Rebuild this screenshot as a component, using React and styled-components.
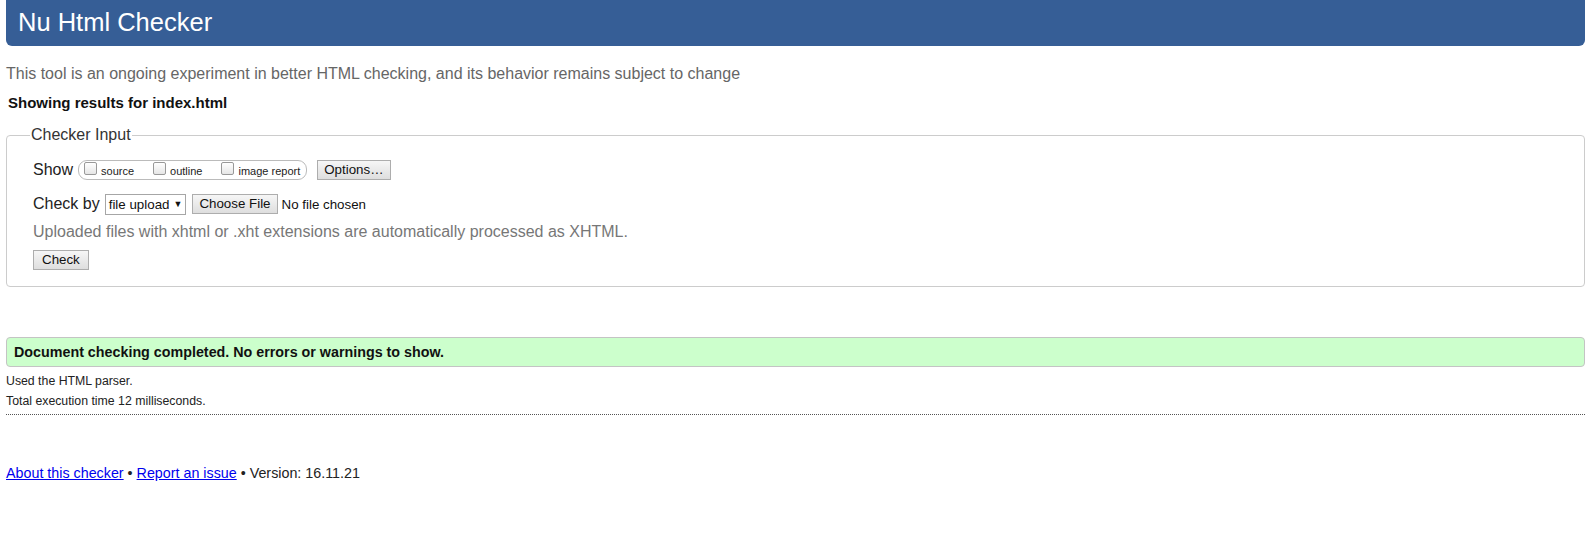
import React from 'react';
import styled, { createGlobalStyle } from 'styled-components';

const GlobalStyle = createGlobalStyle`
  html, body {
    margin: 0;
    padding: 0;
    background: #fff;
  }
  body {
    font-family: "Liberation Sans", Arial, sans-serif;
    color: #222;
  }
`;

const Page = styled.div`
  padding: 0 3px 0 6px;
`;

const Header = styled.h1`
  margin: 0;
  height: 46px;
  background-color: #365e96;
  color: #fff;
  font-size: 25.5px;
  font-weight: normal;
  line-height: 44px;
  padding-left: 12px;
  border-radius: 0 0 6px 6px;
`;

const Intro = styled.p`
  margin: 18px 0 0;
  font-size: 16px;
  line-height: 20px;
  color: #666;
`;

const Results = styled.h2`
  margin: 10px 0 0 2px;
  font-size: 15px;
  line-height: 18px;
  font-weight: bold;
  color: #111;
`;

const Fieldset = styled.fieldset`
  margin: 14px 0 0;
  padding: 15px 26px 16px;
  border: 1px solid #ccc;
  border-radius: 4px;
  min-height: 0;
`;

const Legend = styled.legend`
  padding: 0 1px;
  margin-left: -3px;
  font-size: 16px;
  color: #333;
`;

const Row = styled.div`
  display: flex;
  align-items: center;
  height: 22px;
  margin-bottom: ${(p) => p.$gap || 12}px;
  font-size: 16px;
  color: #222;
`;

const Label = styled.span`
  margin-right: 5px;
`;

const Pill = styled.span`
  display: inline-flex;
  align-items: center;
  height: 18px;
  border: 1px solid #bbb;
  border-radius: 9px;
  padding: 0 6px 0 5px;
  margin-right: 10px;
`;

const Option = styled.label`
  display: inline-flex;
  align-items: center;
  font-size: 11px;
  color: #222;
  padding-top: 2px;
  margin-right: ${(p) => (p.$last ? 0 : 19)}px;
`;

const Box = styled.span`
  display: inline-block;
  width: 11px;
  height: 11px;
  border: 1px solid #999;
  border-radius: 2px;
  background: linear-gradient(#fff, #e6e6e6);
  margin-right: 4px;
  margin-top: -6px;
`;

const Button = styled.button`
  font-family: "Liberation Sans", Arial, sans-serif;
  font-size: 13.33px;
  color: #111;
  height: 20px;
  padding: 0 ${(p) => p.$pad || 6}px;
  border: 1px solid #adadad;
  border-radius: 0;
  background: linear-gradient(#f6f6f6, #dedede);
  line-height: 18px;
  cursor: pointer;
`;

const Select = styled.span`
  display: inline-flex;
  align-items: center;
  height: 19px;
  border: 1px solid #a6a6a6;
  padding: 0 3px 0 3px;
  font-size: 13.33px;
  color: #111;
  margin: 0 6px 0 0;
  gap: 4px;
`;

const Arrow = styled.span`
  font-size: 9px;
`;

const FileName = styled.span`
  font-size: 13.33px;
  margin-left: 4px;
  color: #111;
`;

const Hint = styled.div`
  font-size: 16px;
  color: #777;
  line-height: 20px;
  margin: -3px 0 8px;
`;

const Success = styled.div`
  margin-top: 50px;
  height: 28px;
  border: 1px solid #c4c4c4;
  border-radius: 4px;
  background: #ccffcc;
  padding-left: 7px;
  display: flex;
  align-items: center;
  font-size: 14.3px;
  font-weight: bold;
  color: #111;
`;

const Note = styled.p`
  margin: ${(p) => (p.$first ? 4 : 0)}px 0 0;
  font-size: 12.3px;
  line-height: 20px;
  color: #222;
`;

const Rule = styled.hr`
  margin: 3px 0 0;
  border: 0;
  border-top: 1px dotted #555;
  height: 0;
`;

const Footer = styled.p`
  margin: 50px 0 0;
  font-size: 14.3px;
  color: #222;
  a {
    color: #0000ee;
  }
`;

const options = ['source', 'outline', 'image report'];

export default function App() {
  return (
    <Page>
      <GlobalStyle />
      <Header>Nu Html Checker</Header>
      <Intro>
        This tool is an ongoing experiment in better HTML checking, and its behavior remains subject to change
      </Intro>
      <Results>Showing results for index.html</Results>
      <Fieldset>
        <Legend>Checker Input</Legend>
        <Row>
          <Label>Show</Label>
          <Pill>
            {options.map((o, i) => (
              <Option key={o} $last={i === options.length - 1}>
                <Box />
                {o}
              </Option>
            ))}
          </Pill>
          <Button>Options…</Button>
        </Row>
        <Row $gap={10}>
          <Label>Check by</Label>
          <Select>
            file upload <Arrow>▼</Arrow>
          </Select>
          <Button>Choose File</Button>
          <FileName>No file chosen</FileName>
        </Row>
        <Hint>Uploaded files with xhtml or .xht extensions are automatically processed as XHTML.</Hint>
        <Button $pad={8}>Check</Button>
      </Fieldset>
      <Success>Document checking completed. No errors or warnings to show.</Success>
      <Note $first>Used the HTML parser.</Note>
      <Note>Total execution time 12 milliseconds.</Note>
      <Rule />
      <Footer>
        <a href="#about">About this checker</a> • <a href="#issue">Report an issue</a> • Version: 16.11.21
      </Footer>
    </Page>
  );
}
